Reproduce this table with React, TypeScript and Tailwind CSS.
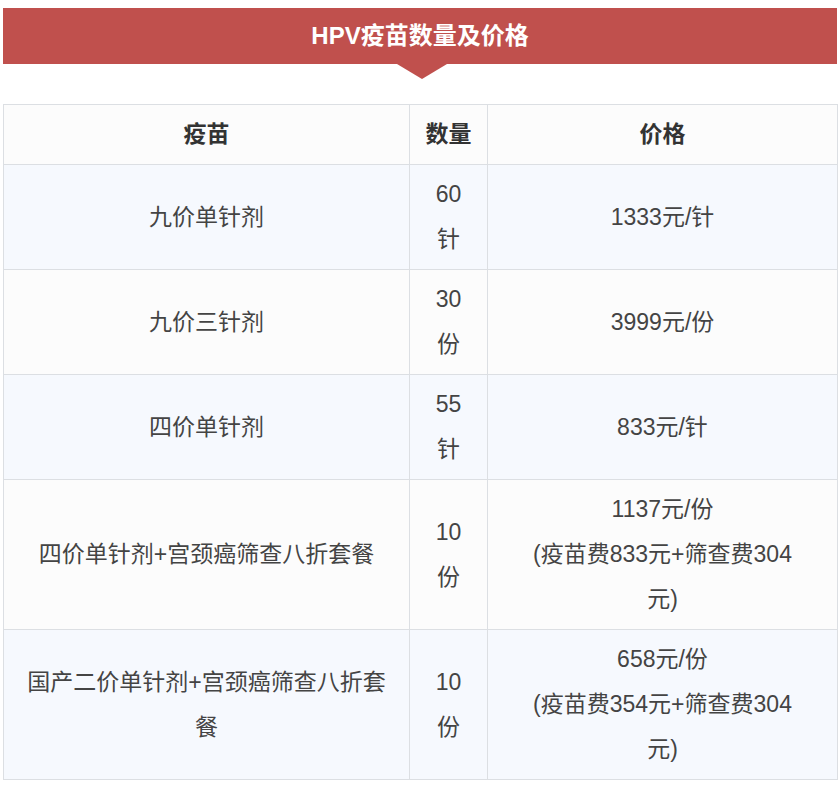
import React from 'react';

interface Row {
  name: React.ReactNode;
  qty: [string, string];
  price: React.ReactNode;
}

const rows: Row[] = [
  { name: '九价单针剂', qty: ['60', '针'], price: '1333元/针' },
  { name: '九价三针剂', qty: ['30', '份'], price: '3999元/份' },
  { name: '四价单针剂', qty: ['55', '针'], price: '833元/针' },
  {
    name: '四价单针剂+宫颈癌筛查八折套餐',
    qty: ['10', '份'],
    price: (
      <>
        1137元/份
        <br />
        (疫苗费833元+筛查费304
        <br />
        元)
      </>
    ),
  },
  {
    name: (
      <>
        国产二价单针剂+宫颈癌筛查八折套
        <br />
        餐
      </>
    ),
    qty: ['10', '份'],
    price: (
      <>
        658元/份
        <br />
        (疫苗费354元+筛查费304
        <br />
        元)
      </>
    ),
  },
];

const cell = 'border border-[#dcdfe3] px-2 py-[7px] text-center align-middle';

export default function App() {
  return (
    <div
      className="w-[840px] bg-white pt-2 text-[#444]"
      style={{ fontFamily: '"Liberation Sans", "Noto Sans CJK SC", sans-serif' }}
    >
      <div className="mx-[3px]">
        <div className="flex h-14 items-center justify-center bg-[#c0504d]">
          <h1 className="text-[24px] font-bold text-white">HPV疫苗数量及价格</h1>
        </div>
        <div className="flex justify-center">
          <div className="ml-[3px] h-0 w-0 border-l-[25px] border-r-[25px] border-t-[15px] border-l-transparent border-r-transparent border-t-[#c0504d]" />
        </div>

        <table className="mt-[25px] w-[835px] table-fixed border-collapse text-[23px] leading-[45px]">
          <colgroup>
            <col className="w-[406px]" />
            <col className="w-[78px]" />
            <col />
          </colgroup>
          <thead>
            <tr className="bg-[#fcfcfc]">
              <th className={`${cell} font-bold text-[#333]`}>疫苗</th>
              <th className={`${cell} px-0 font-bold text-[#333]`}>数量</th>
              <th className={`${cell} font-bold text-[#333]`}>价格</th>
            </tr>
          </thead>
          <tbody>
            {rows.map((row, i) => (
              <tr key={i} className={i % 2 === 0 ? 'bg-[#f6f9fe]' : 'bg-[#fcfcfc]'}>
                <td className={cell}>{row.name}</td>
                <td className={`${cell} px-0`}>
                  {row.qty[0]}
                  <br />
                  {row.qty[1]}
                </td>
                <td className={cell}>{row.price}</td>
              </tr>
            ))}
          </tbody>
        </table>
      </div>
    </div>
  );
}
